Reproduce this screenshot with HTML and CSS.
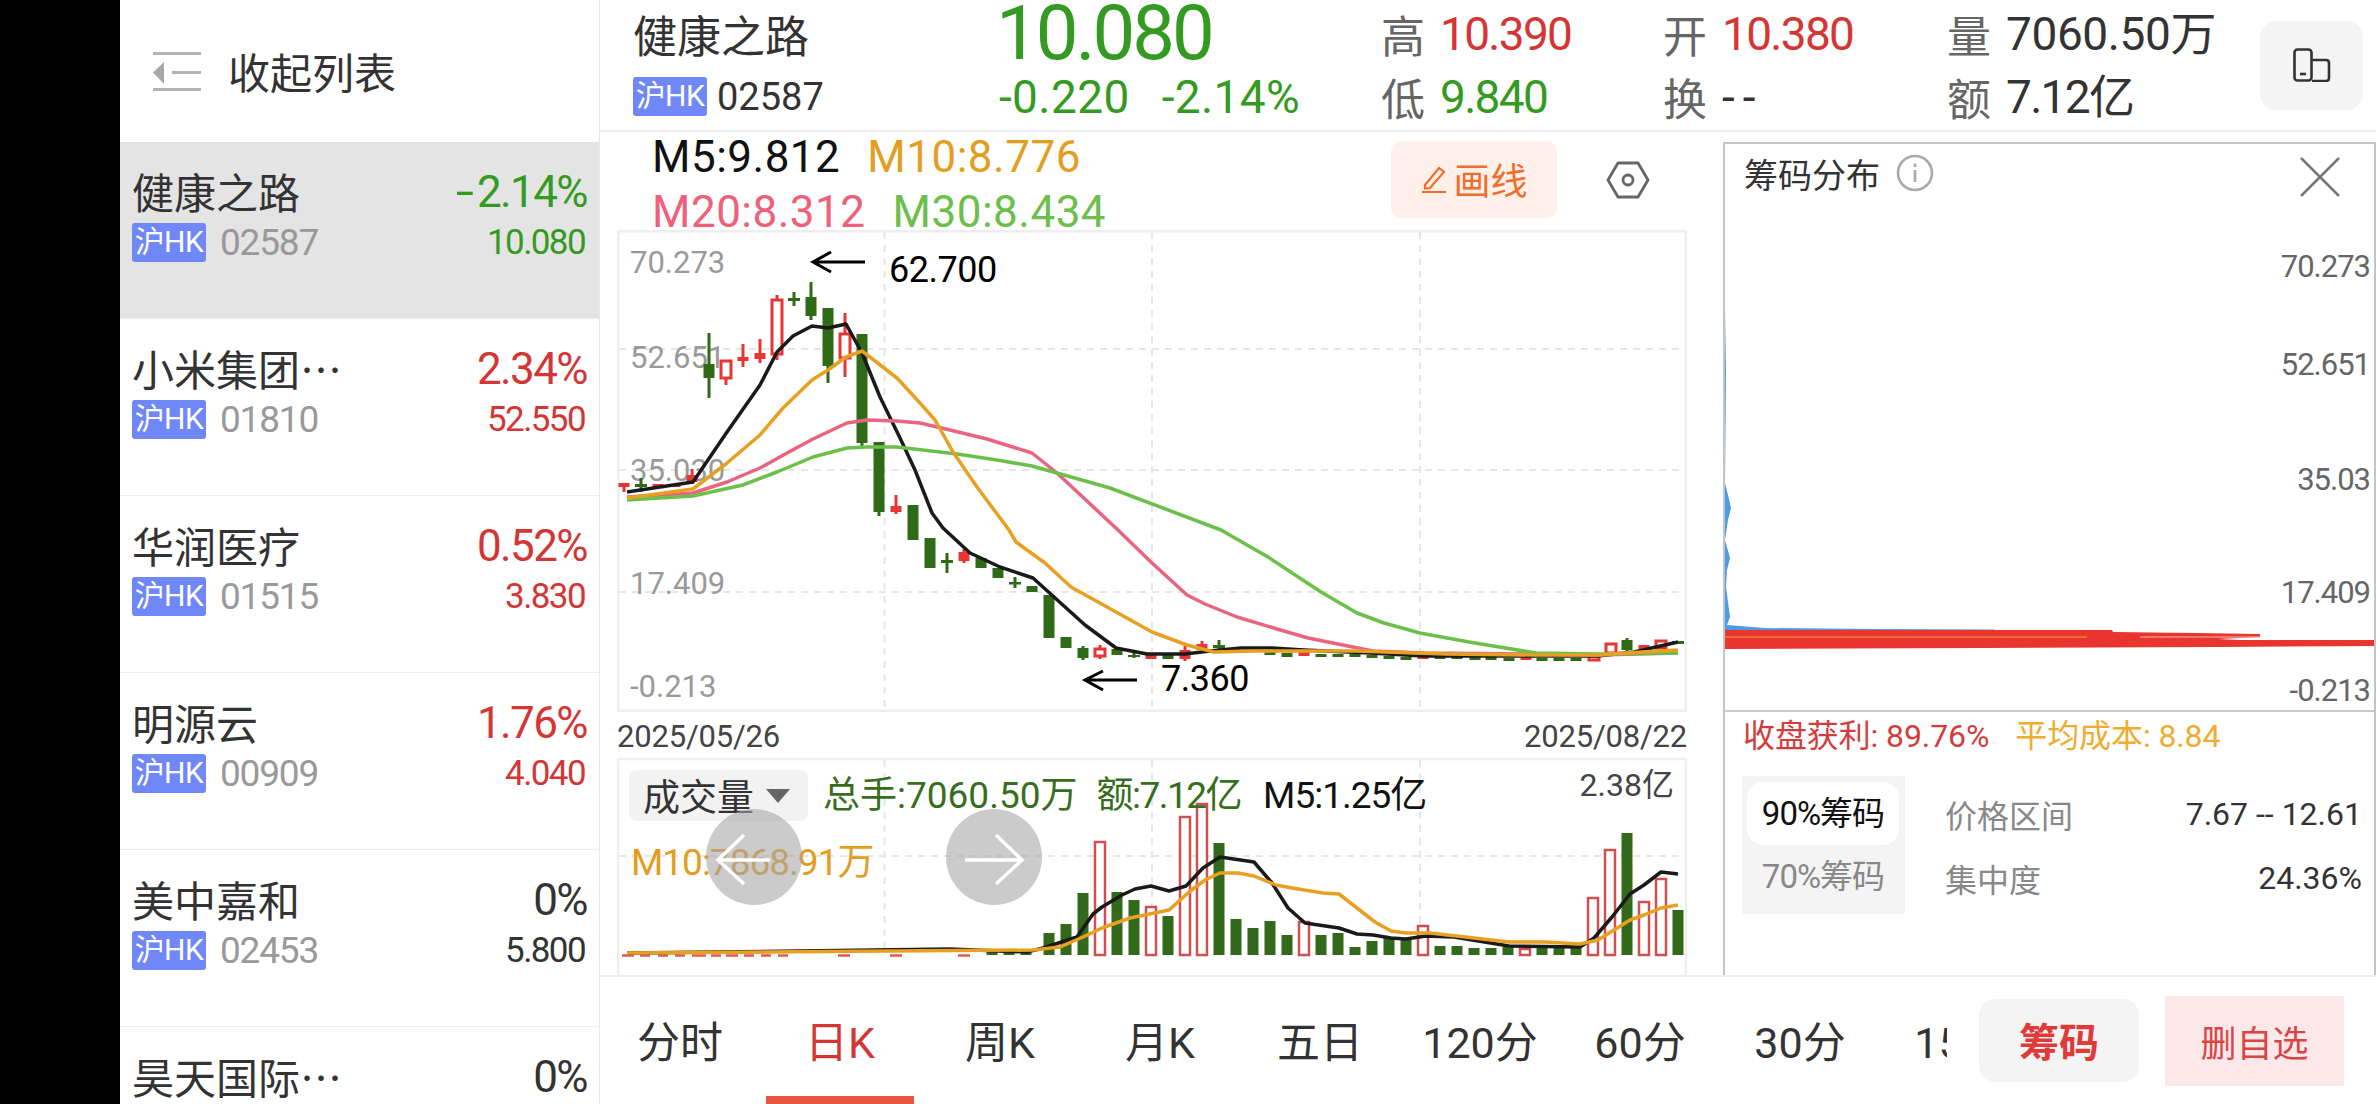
FILE: index.html
```html
<!DOCTYPE html>
<html lang="zh-CN">
<head>
<meta charset="utf-8">
<title>健康之路</title>
<link rel="stylesheet" href="styles.css">
</head>
<body>
<div class="screen">
  <aside class="sidebar">
    <div class="collapse">
      <svg class="collapse-icon" width="48" height="39" viewBox="0 0 48 39"><path d="M0 0h48v3H0zM19 19h29v3H19zM0 36h48v3H0z" fill="#b4b4b4"/><path d="M0 20.500L11 10v22z" fill="#a8a8a8"/></svg>
      <span>收起列表</span>
    </div>
    <div class="row selected">
      <div class="row-top"><span class="name">健康之路</span><span class="pct down"><span class="dash">-</span>2.14%</span></div>
      <div class="row-bot"><span class="badge">沪HK</span><span class="code">02587</span><span class="last down">10.080</span></div>
    </div>
    <div class="row">
      <div class="row-top"><span class="name">小米集团…</span><span class="pct up">2.34%</span></div>
      <div class="row-bot"><span class="badge">沪HK</span><span class="code">01810</span><span class="last up">52.550</span></div>
    </div>
    <div class="row">
      <div class="row-top"><span class="name">华润医疗</span><span class="pct up">0.52%</span></div>
      <div class="row-bot"><span class="badge">沪HK</span><span class="code">01515</span><span class="last up">3.830</span></div>
    </div>
    <div class="row">
      <div class="row-top"><span class="name">明源云</span><span class="pct up">1.76%</span></div>
      <div class="row-bot"><span class="badge">沪HK</span><span class="code">00909</span><span class="last up">4.040</span></div>
    </div>
    <div class="row">
      <div class="row-top"><span class="name">美中嘉和</span><span class="pct flat">0%</span></div>
      <div class="row-bot"><span class="badge">沪HK</span><span class="code">02453</span><span class="last flat">5.800</span></div>
    </div>
    <div class="row">
      <div class="row-top"><span class="name">昊天国际…</span><span class="pct flat">0%</span></div>
    </div>
  </aside>

  <main class="main">
    <header class="quote">
      <div class="q-name">健康之路</div>
      <div class="q-code"><span class="badge">沪HK</span><span>02587</span></div>
      <div class="q-price down">10.080</div>
      <div class="q-change down"><span>-0.220</span><span>-2.14%</span></div>
      <div class="q-cell"><span class="q-label">高</span><span class="q-val up">10.390</span></div>
      <div class="q-cell"><span class="q-label">低</span><span class="q-val down">9.840</span></div>
      <div class="q-cell"><span class="q-label">开</span><span class="q-val up">10.380</span></div>
      <div class="q-cell"><span class="q-label">换</span><span class="q-val q-none">--</span></div>
      <div class="q-cell"><span class="q-label">量</span><span class="q-val q-wide">7060.50万</span></div>
      <div class="q-cell"><span class="q-label">额</span><span class="q-val">7.12亿</span></div>
      <div class="q-switch">
        <svg width="38" height="34" viewBox="0 0 38 34" fill="none" stroke="#333" stroke-width="2.600"><rect x="1.500" y="1.500" width="17" height="31" rx="3"/><path d="M7 26h6"/><path d="M19 12h14q3 0 3 3v15q0 3-3 3H19"/></svg>
      </div>
    </header>

    <div class="content">
      <section class="charts">
        <div class="ma-bar">
          <div class="ma-text">
            <div class="ma-line"><span class="c-black">M5:9.812</span><span class="c-orange">M10:8.776</span></div>
            <div class="ma-line"><span class="c-pink">M20:8.312</span><span class="c-green">M30:8.434</span></div>
          </div>
          <div class="draw-btn">
            <svg width="26" height="27" viewBox="0 0 26 27" fill="none" stroke="#ef6d2d" stroke-width="2.200"><path d="M4 19L18 2l5 4L9 22l-5 .5zM1 26h24"/></svg>
            <span>画线</span>
          </div>
          <svg class="hex" width="44" height="38" viewBox="0 0 44 38" fill="none" stroke="#666" stroke-width="2.800"><path d="M2 19L12 2h20l10 17-10 17H12z"/><circle cx="22" cy="19" r="5"/></svg>
        </div>

        <svg class="kline" width="1070" height="482" viewBox="617 230 1070 482">
          <rect x="618" y="231" width="1068" height="480" fill="#fff" stroke="#eee" stroke-width="3"/>
          <path class="grid" d="M884.500 232V710M1152 232V710M1420 232V710M619 349H1685M619 470H1685M619 592H1685"/>
          <g class="axis">
            <text x="630" y="273">70.273</text>
            <text x="630" y="368">52.651</text>
            <text x="630" y="481">35.030</text>
            <text x="630" y="594">17.409</text>
            <text x="630" y="697">-0.213</text>
          </g>
          <path class="wick-g" d="M641 478V492M709 333V398M794 292V306M811 282V320M828 366V383M862 443V447M879 512V516M947 553V573M1015 577V588M1083 646V660M1219 640V651M1134 652V658M1627 638V652"/>
          <path class="wick-r" d="M624 487V492M692 469V484M726 378V385M743 344V367M760 339V363M777 295V360M845 313V377M896 495V514M964 549V563M1100 645V659M1185 646V661M1202 641V652"/>
          <path class="body-g" d="M635 484h12v3h-12zM703.500 364h11v14h-11zM788 298h12v3h-12zM805.500 297h11v19h-11zM822.500 308h11v58h-11zM856.500 334h11v109h-11zM873.500 442h11v70h-11zM907.500 505h11v35h-11zM924.500 538h11v30h-11zM941 560h12v3h-12zM975.500 558h11v10h-11zM992.500 568h11v10h-11zM1009 582h12v2.500h-12zM1026.500 586h11v6h-11zM1043.500 595h11v43h-11zM1060.500 637h11v11h-11zM1077.500 648h11v10h-11zM1111.500 649h11v6h-11zM1128 655h12v2h-12zM1162.500 655h11v4h-11zM1213 645h12v3h-12zM1264.500 652h11v3h-11zM1281.500 653h11v4h-11zM1315.500 654h11v3h-11zM1332.500 654h11v3h-11zM1349.500 654h11v3h-11zM1366.500 655h11v3h-11zM1383.500 656h11v3h-11zM1400.500 657h11v3h-11zM1434.500 656h11v3h-11zM1451.500 656h11v3h-11zM1469.500 657h11v3h-11zM1485.500 657h11v3h-11zM1503.500 658h11v3h-11zM1536.500 658h11v3h-11zM1553.500 658h11v3h-11zM1570.500 658h11v3h-11zM1621.500 640h11v10h-11zM1672 641h12v3h-12z"/>
          <path class="body-r" d="M618.500 483h11v4h-11zM652.500 484h11v4h-11zM669.500 484h11v3h-11zM686.500 475h11v7h-11zM737.500 357h11v4h-11zM754.500 353h11v6h-11zM890.500 506h11v6h-11zM958.500 552h11v9h-11zM1145.500 654h11v5h-11zM1179.500 650h11v9h-11zM1196.500 644h11v6h-11zM1298.500 652h11v4h-11zM1417.500 655h11v4h-11zM1520.500 656h11v4h-11zM1638.500 645h11v7h-11z"/>
          <path class="body-h" d="M721 361h10v17h-10zM772 300h10v54h-10zM840 334h10v24h-10zM1095 649h10v7h-10zM1606 644h10v9h-10zM1656 641h10v7h-10zM1589 656h10v4h-10z"/>
          <polyline class="l-black" points="627,492 693,482 727,432 760,385 777,352 793,336 812,326 828,328 846,324 862,353 880,397 900,438 915,470 932,513 943,528 970,553 1000,567 1033,578 1054,597 1085,625 1116,648 1147,654 1185,654 1210,651 1241,648 1272,648 1304,650 1370,653 1424,656 1536,656 1598,656 1634,652 1678,642"/>
          <polyline class="l-pink" points="627,497 693,493 727,482 760,468 787,453 813,439 847,423 867,420 897,421 920,423 950,430 987,439 1032,453 1057,473 1118,530 1152,563 1187,595 1205,604 1237,617 1277,629 1308,638 1373,651 1424,653 1536,654 1598,655 1678,653"/>
          <polyline class="l-green" points="627,500 693,496 743,485 777,472 813,457 847,448 867,447 897,447 957,454 997,460 1032,466 1057,473 1110,488 1221,530 1268,557 1321,592 1357,613 1384,623 1420,633 1469,642 1536,653 1598,654 1678,653"/>
          <polyline class="l-orange" points="627,498 693,489 727,463 760,435 783,408 812,380 828,370 846,357 862,351 897,378 920,403 935,420 953,452 977,487 1009,530 1016,542 1045,563 1071,587 1116,612 1152,632 1187,645 1214,652 1254,651 1357,651 1446,654 1536,655 1598,655 1625,653 1678,650"/>
          <path class="note-arrow" d="M865 262H813M831 252L813 262L831 272M1137 680H1085M1103 671L1085 680L1103 690"/>
          <text class="note" x="889" y="282">62.700</text>
          <text class="note" x="1161" y="691">7.360</text>
        </svg>

        <div class="dates"><span>2025/05/26</span><span>2025/08/22</span></div>

        <div class="volume">
          <svg class="vol-chart" width="1070" height="217" viewBox="617 758 1070 217">
            <path class="frame" d="M618 975V759H1686V975"/>
            <path class="grid" d="M884.500 760V955M1152 760V955M1420 760V955M619 856H1685"/>
            <path class="vb-g" d="M1003.500 951h11v4h-11zM1020.500 951h11v4h-11zM986.500 951h11v4h-11zM1043.500 933h11v22h-11zM1060.500 924h11v31h-11zM1077.500 893h11v62h-11zM1111.500 892h11v63h-11zM1128.500 900h11v55h-11zM1162.500 916h11v39h-11zM1213.500 843h11v112h-11zM1230.500 919h11v36h-11zM1247.500 928h11v27h-11zM1264.500 921h11v34h-11zM1281.500 935h11v20h-11zM1315.500 935h11v20h-11zM1332.500 933h11v22h-11zM1349.500 947h11v8h-11zM1366.500 941h11v14h-11zM1383.500 938h11v17h-11zM1400.500 938h11v17h-11zM1434.500 946h11v9h-11zM1451.500 946h11v9h-11zM1468.500 948h11v7h-11zM1485.500 948h11v7h-11zM1502.500 947h11v8h-11zM1536.500 947h11v8h-11zM1553.500 947h11v8h-11zM1570.500 947h11v8h-11zM1621.500 833h11v122h-11zM1672.500 910h11v45h-11z"/>
            <path class="vb-r" d="M1095 842h10v113h-10zM1146 907h10v48h-10zM1180 817h10v138h-10zM1197 804h10v151h-10zM1299 922h10v33h-10zM1418 926h10v29h-10zM1520 949h10v6h-10zM1588 898h10v57h-10zM1605 850h10v105h-10zM1639 902h10v53h-10zM1656 879h10v76h-10z"/>
            <path class="vb-low" d="M622 955.500h12M640 955.500h10M658 955.500h10M675 955.500h10M692 955.500h14M711 955.500h10M726 955.500h12M744 955.500h10M761 955.500h10M778 955.500h10M838 955.500h12M890 955.500h12M958 955.500h12"/>
            <polyline class="l-black" points="627,953 800,951 950,949 1027,952 1043,948 1077,937 1093,914 1102,907 1122,895 1135,889 1151,886 1169,891 1186,886 1203,868 1220,857 1254,862 1272,883 1288,908 1305,923 1339,928 1357,934 1373,935 1391,938 1406,939 1426,936 1454,937 1509,946 1580,947 1594,938 1612,917 1630,894 1644,885 1661,872 1678,874"/>
            <polyline class="l-orange" points="627,953 1033,950 1060,947 1083,937 1102,928 1130,918 1169,910 1189,892 1205,880 1220,873 1238,873 1254,876 1276,885 1292,888 1323,893 1339,894 1375,922 1391,931 1406,933 1430,933 1509,942 1545,942 1580,944 1598,940 1630,920 1644,915 1661,908 1678,905"/>
          </svg>
          <div class="vol-legend">
            <div class="vol-select"><span>成交量</span><svg width="24" height="14" viewBox="0 0 24 14"><path d="M0 0h24L12 14z" fill="#666"/></svg></div>
            <span class="c-dgreen vl-total">总手:7060.50万</span>
            <span class="c-dgreen vl-amt">额:7.12亿</span>
            <span class="c-black vl-rest">M5:1.25亿</span>
          </div>
          <div class="vol-m10 c-orange">M10:7868.91万</div>
          <div class="vol-max">2.38亿</div>
          <div class="pager pager-left"><svg width="96" height="96" viewBox="0 0 96 96" fill="none" stroke="#fff" stroke-width="3.500"><path d="M64 51H12M38 26L12 51L38 75"/></svg></div>
          <div class="pager pager-right"><svg width="96" height="96" viewBox="0 0 96 96" fill="none" stroke="#fff" stroke-width="3.500"><path d="M19 51H76M50 26L76 51L50 75"/></svg></div>
        </div>
      </section>

      <section class="chips">
        <div class="chip-head">
          <span>筹码分布</span>
          <svg class="info" width="38" height="38" viewBox="0 0 38 38" fill="none" stroke="#aaa" stroke-width="2.600"><circle cx="19" cy="19" r="17"/><path d="M19 16v12"/><path d="M19 9.500v3.500"/></svg>
          <svg class="close" width="40" height="40" viewBox="0 0 40 40" fill="none" stroke="#777" stroke-width="2.500"><path d="M1 1L39 39M39 1L1 39"/></svg>
        </div>
        <svg class="chip-chart" width="649" height="514" viewBox="1725 196 649 514">
          <path fill="#4d9be8" d="M1725 310L1726 373L1725 483L1728 495L1731 508L1728 520L1725 540L1730 558L1727 570L1726 587L1730 617L1727 625L1765 628L1875 629L1995 629.500V631H1725z"/>
          <path fill="#e8352e" d="M1725 630H2112L2113 632L2195 633L2260 634V637L2218 639L2238 640L2374 640V646L2220 647L1980 648L1725 649z"/>
          <path d="M1725 637H2087" stroke="#f4a340" stroke-width="1"/>
          <path d="M2140 637H2260" stroke="#f6b6b2" stroke-width="1"/>
          <g class="chip-axis">
            <text x="2370" y="277">70.273</text>
            <text x="2370" y="375">52.651</text>
            <text x="2370" y="490">35.03</text>
            <text x="2370" y="603">17.409</text>
            <text x="2370" y="701">-0.213</text>
          </g>
        </svg>
        <div class="chip-sum"><span class="c-red">收盘获利: 89.76%</span><span class="c-amber">平均成本: 8.84</span></div>
        <div class="chip-stats">
          <div class="chip-tabs">
            <div class="chip-tab on">90%筹码</div>
            <div class="chip-tab">70%筹码</div>
          </div>
          <div class="chip-table">
            <div class="chip-row"><span>价格区间</span><b>7.67 -- 12.61</b></div>
            <div class="chip-row"><span>集中度</span><b>24.36%</b></div>
          </div>
        </div>
      </section>
    </div>

    <nav class="bottom">
      <div class="tabs">
        <div class="tab">分时</div>
        <div class="tab active">日K</div>
        <div class="tab">周K</div>
        <div class="tab">月K</div>
        <div class="tab">五日</div>
        <div class="tab">120分</div>
        <div class="tab">60分</div>
        <div class="tab">30分</div>
        <div class="tab">15分</div>
      </div>
      <div class="btn-chip">筹码</div>
      <div class="btn-del">删自选</div>
    </nav>
  </main>
</div>
</body>
</html>
```

FILE: styles.css
```css
* { box-sizing: border-box; }
html, body { margin: 0; height: 100%; background: #000; overflow: hidden; }
body { font-family: Roboto, "Noto Sans CJK SC", sans-serif; color: #333; font-variant-ligatures: none; }
.screen { display: flex; width: 2376px; height: 1104px; padding-left: 120px; background: #000; overflow: hidden; }

.up { color: #d43636; }
.down { color: #339a22; }
.flat { color: #333; }
.c-black { color: #111; }
.c-orange { color: #e39e1f; }
.c-pink { color: #ef6079; }
.c-green { color: #6cbf4b; }
.c-dgreen { color: #366e1d; }
.c-red { color: #d43c3c; }
.c-amber { color: #efac2e; }

/* sidebar */
.sidebar { width: 480px; flex: none; height: 1104px; background: #fff; border-right: 1px solid #e8e8e8; overflow: hidden; }
.collapse { height: 140px; margin-bottom: 2px; display: flex; align-items: center; padding-left: 33px; font: 42px/61px "Noto Sans CJK SC", sans-serif; color: #333; }
.collapse-icon { margin-right: 27px; margin-top: 2px; }
.row { height: 177px; padding: 18px 12px 0; border-bottom: 1px solid #eee; }
.row.selected { background: #e4e4e4; }
.row-top { display: flex; justify-content: space-between; align-items: center; height: 61px; }
.name { font: 42px/61px "Noto Sans CJK SC", sans-serif; color: #333; }
.pct { font-size: 44px; letter-spacing: -1.600px; line-height: 61px; margin-top: 4px; }
.dash { display: inline-block; transform: scaleX(1.5); transform-origin: right center; margin-right: 5px; }
.row-bot { display: flex; align-items: center; height: 39px; margin-top: 2px; }
.badge { display: block; width: 74px; height: 39px; background: #7088f7; border-radius: 3px; color: #fff; font-size: 30px; line-height: 38px; text-align: center; white-space: nowrap; letter-spacing: -0.500px; }
.code { margin-left: 14px; font-size: 37px; letter-spacing: -1.200px; color: #999; }
.last { margin-left: auto; margin-right: 2px; font-size: 35px; letter-spacing: -1.600px; }

/* quote header */
.main { width: 1776px; flex: none; height: 1104px; background: #fff; display: flex; flex-direction: column; }
.quote { height: 132px; flex: none; border-bottom: 2px solid #ececec; display: grid; grid-auto-flow: column; grid-template-columns: 366px 382px 282px 284px 313px 103px; grid-template-rows: 63px 63px; padding-left: 33px; padding-top: 2px; align-items: center; }
.q-name { font: 44px/62px "Noto Sans CJK SC", sans-serif; }
.q-code { display: flex; align-items: center; gap: 10px; font-size: 38px; }
.q-price { font-size: 76px; line-height: 63px; letter-spacing: -3px; margin-left: -3px; }
.q-change { display: flex; gap: 32px; font-size: 46px; letter-spacing: 0.400px; }
.q-cell { display: flex; align-items: center; gap: 15px; }
.q-label { font: 44px/62px "Noto Sans CJK SC", sans-serif; color: #666; }
.q-val { font-size: 46px; letter-spacing: -1.700px; line-height: 62px; }
.q-wide { letter-spacing: -0.400px; }
.q-none { letter-spacing: 8px; }
.q-switch { grid-row: 1 / span 2; align-self: center; width: 103px; height: 89px; border-radius: 16px; background: #f4f4f4; display: flex; align-items: center; justify-content: center; }

/* charts */
.content { flex: 1; display: flex; min-height: 0; }
.charts { width: 1123px; flex: none; padding-left: 17px; }
.ma-bar { height: 98px; display: flex; align-items: flex-start; overflow: hidden; }
.ma-text { width: 774px; padding-left: 35px; flex: none; }
.ma-line { display: flex; gap: 27px; font-size: 44px; line-height: 50px; margin-bottom: 5px; letter-spacing: 0.500px; }
.draw-btn { width: 166px; height: 77px; margin-top: 9px; border-radius: 10px; background: #fff0ea; color: #ef6d2d; font: 37px/77px "Noto Sans CJK SC", sans-serif; display: flex; align-items: center; justify-content: center; gap: 7px; }
.hex { margin: 29px 0 0 49px; }
.kline { display: block; }
.grid { fill: none; stroke: #e6e6e6; stroke-width: 2; stroke-dasharray: 7 6; }
.axis text { font-size: 31px; fill: #999; }
.wick-g { fill: none; stroke: #2e6a17; stroke-width: 3; }
.wick-r { fill: none; stroke: #e63535; stroke-width: 3; }
.body-g { fill: #2e6a17; }
.body-r { fill: #e63535; }
.body-h { fill: #fff; stroke: #e63535; stroke-width: 3; }
polyline { fill: none; stroke-width: 3.500; stroke-linejoin: round; }
.l-black { stroke: #1a1a1a; }
.l-orange { stroke: #e8a022; }
.l-pink { stroke: #e9657f; }
.l-green { stroke: #6cc04a; }
.note-arrow { fill: none; stroke: #000; stroke-width: 3; }
.note { font-size: 36px; fill: #000; letter-spacing: -0.500px; }
.dates { height: 46px; width: 1070px; display: flex; justify-content: space-between; align-items: center; font-size: 31px; letter-spacing: -0.200px; color: #444; padding-top: 2px; }

.volume { position: relative; width: 1070px; height: 217px; }
.vol-chart { display: block; }
.frame { fill: none; stroke: #eee; stroke-width: 2.500; }
.vb-g { fill: #33691a; }
.vb-r { fill: #fff; stroke: #cf5050; stroke-width: 2.500; }
.vb-low { fill: none; stroke: #e25a50; stroke-width: 2.500; }
.vol-legend { position: absolute; left: 12px; top: 12px; display: flex; align-items: center; gap: 22px; font-size: 37px; line-height: 51px; white-space: nowrap; }
.vl-total { margin-right: -3px; }
.vl-amt { letter-spacing: -1.500px; }
.vl-rest { letter-spacing: -1px; }
.vol-select { width: 179px; height: 51px; background: #f2f2f2; border-radius: 8px; display: flex; align-items: center; gap: 12px; padding-left: 14px; font: 37px/51px "Noto Sans CJK SC", sans-serif; color: #333; margin-right: -7px; }
.vol-m10 { position: absolute; left: 14px; top: 83px; font-size: 37px; letter-spacing: -1px; line-height: 44px; white-space: nowrap; }
.vol-max { position: absolute; right: 13px; top: 6px; font-size: 32px; line-height: 42px; color: #444; }
.pager { position: absolute; top: 51px; width: 96px; height: 96px; border-radius: 50%; background: rgba(165, 165, 165, 0.58); }
.pager svg { display: block; }
.pager-left { left: 89px; }
.pager-right { left: 329px; }

/* chips */
.chips { width: 653px; flex: none; height: 833px; margin-top: 10px; border: 2px solid #c4c4c4; border-bottom: 0; background: #fff; }
.chip-head { height: 52px; display: flex; align-items: center; padding: 8px 0 0 19px; font: 34px/44px "Noto Sans CJK SC", sans-serif; color: #333; }
.info { margin-left: 16px; margin-top: -2px; }
.close { margin-left: auto; margin-right: 34px; margin-top: 6px; }
.chip-chart { display: block; }
.chip-axis text { font-size: 31px; fill: #666; text-anchor: end; letter-spacing: -1px; }
.chip-sum { border-top: 2px solid #ccc; height: 44px; display: flex; gap: 26px; align-items: center; padding-left: 18px; font-size: 32px; letter-spacing: -0.100px; white-space: nowrap; }
.chip-stats { display: flex; align-items: flex-start; margin-top: 22px; }
.chip-tabs { width: 163px; height: 138px; margin-left: 17px; background: #f4f4f4; padding: 6px 6px 0 5px; color: #888; font-size: 33px; letter-spacing: -1px; }
.chip-tab { height: 63px; border-radius: 16px; line-height: 63px; text-align: center; white-space: nowrap; }
.chip-tab.on { background: #fff; color: #111; }
.chip-table { flex: 1; padding: 6px 12px 0 40px; }
.chip-row { display: flex; justify-content: space-between; align-items: center; height: 64px; font-size: 32px; white-space: nowrap; }
.chip-row span { color: #888; }
.chip-row b { font-weight: 400; color: #333; }

/* bottom nav */
.bottom { height: 129px; flex: none; border-top: 2px solid #eee; display: flex; align-items: center; }
.tabs { width: 1347px; height: 127px; flex: none; display: flex; overflow: hidden; }
.tab { width: 160px; flex: none; position: relative; display: flex; align-items: center; justify-content: center; font-size: 43px; white-space: nowrap; color: #333; padding-bottom: 3px; }
.tab.active { color: #d43636; }
.tab.active::after { content: ""; position: absolute; left: 6px; bottom: 0; width: 148px; height: 8px; background: #e8563f; }
.btn-chip { width: 160px; height: 83px; margin-left: 32px; border-radius: 16px; background: #f4f4f4; color: #e03a3a; font: 700 40px/83px "Noto Sans CJK SC", sans-serif; text-align: center; flex: none; }
.btn-del { width: 179px; height: 90px; margin-left: 26px; background: #fde8e9; color: #d84545; font: 36px/90px "Noto Sans CJK SC", sans-serif; text-align: center; flex: none; }
```
